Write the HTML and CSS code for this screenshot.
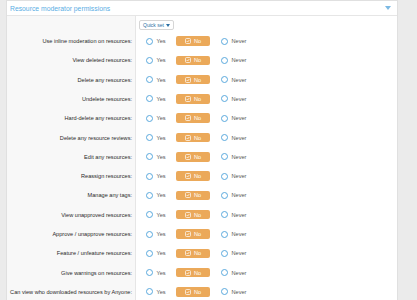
FILE: index.html
```
<!DOCTYPE html>
<html>
<head>
<meta charset="utf-8">
<link rel="stylesheet" href="styles.css">
</head>
<body>
<div class="page">
  <div class="block">
    <div class="block-header">
      <span class="title">Resource moderator permissions</span>
      <svg class="caret" width="6" height="4" viewBox="0 0 6 4"><path d="M0 0 L6 0 L3 4 Z" fill="#7cb9e3"/></svg>
    </div>
    <div class="form">
      <div class="label-col"></div>
      <div class="quick"><span class="quick-btn">Quick set <svg width="4" height="3" viewBox="0 0 4 3"><path d="M0 0 L4 0 L2 3Z" fill="#2b6fa3"/></svg></span></div>
    </div>
    <div id="rows"></div>
  </div>
</div>
<script>
var labels = ["Use inline moderation on resources:","View deleted resources:","Delete any resources:","Undelete resources:","Hard-delete any resources:","Delete any resource reviews:","Edit any resources:","Reassign resources:","Manage any tags:","View unapproved resources:","Approve / unapprove resources:","Feature / unfeature resources:","Give warnings on resources:","Can view who downloaded resources by Anyone:"];
var html = "";
labels.forEach(function(l){
  html += '<div class="row"><div class="label">'+l+'</div><div class="choices">'+
  '<span class="choice"><span class="radio"></span>Yes</span>'+
  '<span class="choice sel"><svg class="chk" width="6" height="6" viewBox="0 0 6 6"><rect x="0.5" y="0.5" width="5" height="5" rx="1" fill="none" stroke="#fff" stroke-width="0.7"/><path d="M1.6 3 L2.6 4 L4.4 2" fill="none" stroke="#fff" stroke-width="0.7"/></svg>No</span>'+
  '<span class="choice"><span class="radio"></span>Never</span>'+
  '</div></div>';
});
document.getElementById("rows").innerHTML = html;
</script>
</body>
</html>
```
FILE: styles.css
```
html, body {
  margin: 0;
  padding: 0;
  background: #ebebeb;
  font-family: "Liberation Sans", Arial, sans-serif;
}
.page {
  width: 417px;
  height: 300px;
  overflow: hidden;
  padding-left: 6px;
  box-sizing: border-box;
}
.block {
  width: 392px;
  border: 1px solid #e0e0e0;
  border-bottom: none;
  box-sizing: border-box;
  height: 300px;
  background: linear-gradient(to right, #f8f8f8 0, #f8f8f8 128px, #e6e6e6 128px, #e6e6e6 129px, #fff 129px);
}
.block-header {
  height: 15px;
  background: #fff;
  border-bottom: 1px solid #e6e6e6;
  display: flex;
  align-items: center;
  justify-content: space-between;
  padding: 0 6px 0 3px;
  box-sizing: border-box;
}
.title {
  color: #5aaee4;
  font-size: 6.8px;
}
.caret {
  display: block;
}
.form {
  display: flex;
  height: 15.4px;
}
.label-col {
  width: 132px;
}
.quick {
  padding-top: 4px;
}
.quick-btn {
  display: flex;
  align-items: center;
  gap: 2px;
  height: 10px;
  box-sizing: border-box;
  padding: 0 3px;
  border: 1px solid #d6d6d6;
  border-radius: 2px;
  background: #fff;
  color: #2b6fa3;
  font-size: 5px;
  white-space: nowrap;
}
.row {
  display: flex;
  align-items: center;
  height: 19.3px;
}
.label {
  width: 125px;
  text-align: right;
  font-size: 5.6px;
  color: #2a2a2a;
  white-space: nowrap;
}
.choices {
  display: flex;
  align-items: center;
  margin-left: 14px;
}
.choice {
  display: flex;
  align-items: center;
  font-size: 5.6px;
  color: #555;
}
.choice:first-child {
  width: 30px;
}
.radio {
  width: 5px;
  height: 5px;
  border: 0.8px solid #5aa9dd;
  border-radius: 50%;
  margin-right: 3.5px;
}
.sel {
  width: 34px;
  height: 9.5px;
  background: #eba95a;
  border-radius: 2px;
  color: #fff;
  justify-content: center;
  gap: 3px;
  margin-right: 11px;
}
.chk {
  display: block;
}
```
